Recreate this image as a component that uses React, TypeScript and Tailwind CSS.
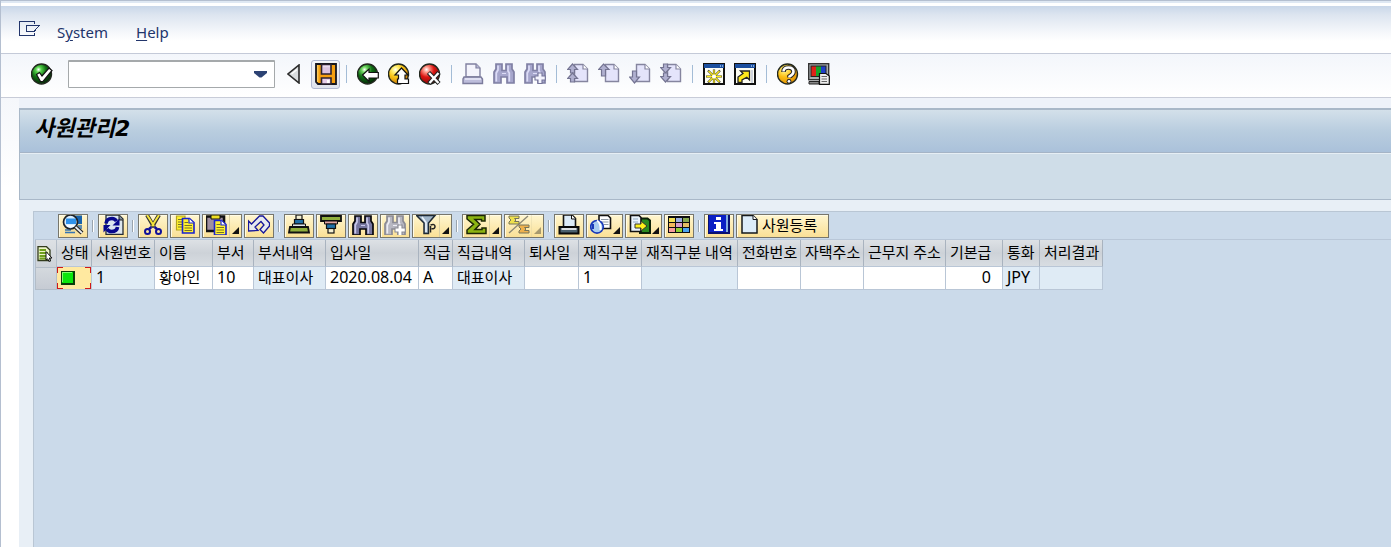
import React from 'react';

type IconProps = { children: React.ReactNode; w?: number; h?: number; crisp?: boolean };

function Glyph({ children, w = 22, h = 22, crisp = false }: IconProps) {
  return (
    <svg
      width={w}
      height={h}
      viewBox={`0 0 ${w} ${h}`}
      fill="none"
      aria-hidden="true"
      className="block shrink-0"
      shapeRendering={crisp ? 'crispEdges' : undefined}
    >
      {children}
    </svg>
  );
}

/* ---------- standard toolbar icons ---------- */

function Ball({ id, light, mid, dark, children }: { id: string; light: string; mid: string; dark: string; children: React.ReactNode }) {
  return (
    <Glyph>
      <defs>
        <radialGradient id={id} cx="0.35" cy="0.28" r="0.75">
          <stop offset="0" stopColor="#ffffff" />
          <stop offset="0.18" stopColor={light} />
          <stop offset="0.5" stopColor={mid} />
          <stop offset="1" stopColor={dark} />
        </radialGradient>
      </defs>
      <circle cx="10.5" cy="11" r="10" fill={`url(#${id})`} stroke="#22281f" strokeWidth="1.4" />
      {children}
    </Glyph>
  );
}

const CheckIcon = () => (
  <Ball id="ball-check" light="#58d44c" mid="#0f6e12" dark="#042606">
    <path d="M5.5 11.5 L8.5 9.5 L11 13 L18 5 L21 7.5 L12 18.5 L9.5 18.5 Z" fill="#fff" stroke="#111" strokeWidth="1.2" />
  </Ball>
);
const BackIcon = () => (
  <Ball id="ball-back" light="#70d860" mid="#0f6e14" dark="#042606">
    <path d="M5.5 12 L12 6 V9.5 H21.3 V15 H12 V18.5 Z" fill="#fff" stroke="#111" strokeWidth="1.2" />
  </Ball>
);
const UpIcon = () => (
  <Ball id="ball-up" light="#fff27a" mid="#f8c414" dark="#c8780c">
    <path d="M13.5 5 L20 12 H17 V16 H20.5 V20.5 H9.5 V16 H10.5 V12 H7 Z" fill="#fff" stroke="#111" strokeWidth="1.2" />
  </Ball>
);
const CancelIcon = () => (
  <Ball id="ball-cancel" light="#ff9a8c" mid="#dc1512" dark="#800808">
    <path d="M9.5 9.5 L20 20.5 M20 9.5 L10 20.5" stroke="#222" strokeWidth="4.4" />
    <path d="M10 10 L19.5 20 M19.5 10 L10.5 20" stroke="#fff" strokeWidth="2.4" />
  </Ball>
);

const TriangleIcon = () => (
  <svg width="13" height="20" viewBox="0 0 13 20" aria-hidden="true" className="block">
    <path d="M12 1 V19 L1 10 Z" fill="#d9dcde" stroke="#2a2a2a" strokeWidth="1.6" />
    <path d="M10 5.5 L4.5 10" stroke="#fff" strokeWidth="1.4" />
  </svg>
);

const SaveIcon = () => (
  <Glyph>
    <path d="M1 1 H21 V21 H3 L1 19 Z" fill="#f59f10" stroke="#16161e" strokeWidth="1.8" />
    <path d="M2.8 2 V19" stroke="#ffd978" />
    <path d="M6.5 1.5 V11 H16 V1.5 Z" fill="#dcc3e0" stroke="#2b2230" strokeWidth="1.6" />
    <path d="M8 3.5 H15" stroke="#ebdcee" strokeWidth="1.5" />
    <path d="M6.5 21 V15 H16 V21 Z" fill="#e6cdea" stroke="#2b2230" strokeWidth="1.6" />
    <rect x="12" y="17" width="2.5" height="3" fill="#fff" />
  </Glyph>
);

const PrintGray = () => (
  <Glyph>
    <path d="M4 1 H14 L18 5 V14 H4 Z" fill="#f4f4fc" stroke="#8080a0" strokeWidth="1.4" />
    <path d="M14 1 V5 H18" fill="#b9b9d5" stroke="#8080a0" strokeWidth="1.2" />
    <path d="M2 14 H19 L20.5 16 V20.5 H1 V16 Z" fill="#bdbddb" stroke="#7c7c9c" strokeWidth="1.4" />
    <path d="M3 16 H19" stroke="#f2f2ff" strokeWidth="1.3" />
  </Glyph>
);

function Binocular({ fill, stroke, light }: { fill: string; stroke: string; light: string }) {
  return (
    <>
      <path d="M3 1 H9 V7.5 H13 V1 H19 V6 L21 9 V20 H14 V14 H8 V20 H1 V9 L3 6 Z" fill={fill} stroke={stroke} strokeWidth="1.7" />
      <path d="M5 2.5 V7 L3.3 10 V18.5 M15 2.5 V8 L16.3 10 V18.5" stroke={light} strokeWidth="1.7" />
      <path d="M9 10.5 H13" stroke={light} />
    </>
  );
}
const Plus = ({ fill, stroke }: { fill: string; stroke: string }) => (
  <path d="M14 10 H18 V13 H21.3 V17 H18 V20.5 H14 V17 H11 V13 H14 Z" fill={fill} stroke={stroke} strokeWidth="1.1" />
);
const FindGray = () => (
  <Glyph>
    <Binocular fill="#a6a6cc" stroke="#8080a4" light="#dcdcf6" />
  </Glyph>
);
const FindNextGray = () => (
  <Glyph>
    <Binocular fill="#a6a6cc" stroke="#8080a4" light="#dcdcf6" />
    <Plus fill="#f3f3fd" stroke="#75759a" />
  </Glyph>
);

function Page() {
  return (
    <g transform="translate(7 1)">
      <path d="M0.5 0.5 H9 L13.5 5 V17.5 H0.5 Z" fill="#e4e4fb" stroke="#85859f" strokeWidth="1.4" />
      <path d="M9 0.5 V5 H13.5" fill="#fff" stroke="#85859f" strokeWidth="1.2" />
    </g>
  );
}
const arrowUp = 'M5.5 0 L10.5 5.5 H7.5 V9 H3.5 V5.5 H0.5 Z';
const arrowDown = 'M3.5 0 H7.5 V3.5 H10.5 L5.5 9 L0.5 3.5 H3.5 Z';
const arrowStyle = { fill: '#b0b0d0', stroke: '#747492', strokeWidth: 1.2 };
const FirstPage = () => (
  <Glyph>
    <Page />
    <path d={arrowUp} transform="translate(0 1)" {...arrowStyle} />
    <path d={arrowUp} transform="translate(0 10)" {...arrowStyle} />
  </Glyph>
);
const PrevPage = () => (
  <Glyph>
    <Page />
    <path d="M5.5 1 L11 6.5 H7.5 V13 H3.5 V6.5 H0.5 Z" {...arrowStyle} />
  </Glyph>
);
const NextPage = () => (
  <Glyph>
    <Page />
    <path d="M3.5 8 H7.5 V14 H10.5 L5.5 20 L0.5 14 H3.5 Z" {...arrowStyle} />
  </Glyph>
);
const LastPage = () => (
  <Glyph>
    <Page />
    <path d={arrowDown} transform="translate(0 1)" {...arrowStyle} />
    <path d={arrowDown} transform="translate(0 10)" {...arrowStyle} />
  </Glyph>
);

const WindowFrame = () => (
  <>
    <rect x="1" y="1" width="20" height="20" fill="#fdfdf4" stroke="#111" strokeWidth="2" />
    <rect x="1" y="1" width="20" height="4" fill="#1c4f9f" />
    <path d="M17 3 H18 M19 3 H20" stroke="#9fc2f0" strokeWidth="1.5" />
  </>
);
const NewSession = () => (
  <Glyph>
    <WindowFrame />
    <path d="M11 6.5 V20 M3 13.5 H19 M5 7.5 L17 19.5 M17 7.5 L5 19.5" stroke="#333" strokeWidth="2.2" />
    <path d="M11 7 V20 M3.5 13.5 H18.5 M5.5 8 L16.5 19 M16.5 8 L5.5 19" stroke="#ffee19" strokeWidth="1.3" />
    <circle cx="11" cy="13.5" r="2" fill="#fff" />
  </Glyph>
);
const Shortcut = () => (
  <Glyph>
    <WindowFrame />
    <path d="M4 19.5 V14 L9 10.5 L6.5 8 H15.5 V17 L12.8 14.3 L8 17 V19.5 Z" fill="#ffe71b" stroke="#222" strokeWidth="1.3" />
    <path d="M18 7 V20" stroke="#cfd3dc" strokeWidth="2" />
  </Glyph>
);
const HelpIcon = () => (
  <Ball id="ball-help" light="#ffe96a" mid="#fbbf14" dark="#e09005">
    <path d="M6.5 9 Q6.5 4.5 11.5 4.5 Q16.5 4.5 16.5 8.7 Q16.5 11 12.5 13.5 V14.5" stroke="#222" strokeWidth="4.6" />
    <circle cx="12" cy="18.3" r="2.4" fill="#222" />
    <path d="M6.5 8.5 Q6.5 4.5 11.5 4.5 Q16.5 4.5 16.5 8.7 Q16.5 11 12.5 13.5 V14.5" stroke="#fff" strokeWidth="2.6" />
    <circle cx="12" cy="18.3" r="1.4" fill="#fff" />
  </Ball>
);
const LayoutIcon = () => (
  <Glyph>
    <rect x="0.7" y="0.7" width="20" height="16" fill="#a9aeb0" stroke="#333" strokeWidth="1.4" />
    <rect x="3" y="3" width="5" height="10.5" fill="#e02118" />
    <rect x="8" y="3" width="5" height="10.5" fill="#16a52a" />
    <rect x="13" y="3" width="5" height="10.5" fill="#1c3fc8" />
    <rect x="3" y="3" width="15" height="10.5" stroke="#222" />
    <path d="M1 18.5 H11 V21 H1 Z" fill="#888" stroke="#222" />
    <path d="M11.5 10.5 H18 L21.3 13 V21.3 H11.5 Z" fill="#eee" stroke="#111" strokeWidth="1.2" />
    <path d="M13.5 13.5 H19 M13.5 16 H19 M13.5 18.5 H19" stroke="#666" />
  </Glyph>
);

/* ---------- grid toolbar icons (22 x 20) ---------- */

const Alv = ({ children, crisp = false }: { children: React.ReactNode; crisp?: boolean }) => (
  <Glyph w={22} h={20} crisp={crisp}>
    {children}
  </Glyph>
);

const DetailIcon = () => (
  <Alv>
    <path d="M3 0 H20 V18.5 H3 Z" fill="#f0dfa0" />
    <path d="M8 0.5 H20 V9 H13 Z" fill="#1763ad" />
    <path d="M16 11 H20 M17 13 H20 M3 15 H9 M3 17.5 H13" stroke="#3576b4" strokeWidth="1.6" />
    <circle cx="8.5" cy="7" r="7" fill="#d8eeff" stroke="#1d2127" strokeWidth="1.7" />
    <path d="M4 3.5 H14 V9 H4 Z" fill="#2f92ea" />
    <path d="M5 11 H12" stroke="#fff" strokeWidth="1.5" />
    <path d="M13.5 12 L20 18" stroke="#222" strokeWidth="4.2" />
    <path d="M13.5 12 L20 18" stroke="#e8ecef" strokeWidth="1.8" />
  </Alv>
);
const RefreshIcon = () => (
  <Alv>
    <path d="M4 0 H17 L21 4 V19.5 H4 Z" fill="#dce6ee" stroke="#222b35" strokeWidth="1.3" />
    <path d="M17 0 V5 H21" fill="#7e8b96" stroke="#222" />
    <path d="M4 8.5 Q4.5 3.5 10 3.5 Q13 3.5 14.5 6.2" stroke="#08088c" strokeWidth="3.6" />
    <path d="M17.5 3.5 V10.5 H10.5 Z" fill="#08088c" />
    <path d="M15.5 12 Q15 16.5 9.5 16.5 Q6.5 16.5 5 14" stroke="#08088c" strokeWidth="3.6" />
    <path d="M1.5 17.5 V10 H8.5 Z" fill="#08088c" />
  </Alv>
);
const CutIcon = () => (
  <Alv>
    <path d="M5 0 L12 12 M17 0 L10 12" stroke="#333" strokeWidth="4" />
    <path d="M5 0 L12 11 M17 0 L10 11" stroke="#f5e63b" strokeWidth="2" />
    <path d="M9.5 12 L7 14 M12.5 12 L15 14" stroke="#10109a" strokeWidth="2.4" />
    <circle cx="5.5" cy="16.5" r="2.5" stroke="#10109a" strokeWidth="2" />
    <circle cx="16.5" cy="16.5" r="2.5" stroke="#10109a" strokeWidth="2" />
  </Alv>
);
const Lines = () => (
  <>
    <path d="M8.5 3.5 H15.5 L20 7.5 V18 H8.5 Z" fill="#fff12c" stroke="#1a22d0" strokeWidth="1.6" />
    <path d="M15 3.5 V8 H19.5" fill="#fff" stroke="#1a22d0" strokeWidth="1.2" />
    <path d="M10.5 7.5 H14 M10.5 10.5 H18 M10.5 13 H18 M10.5 15.5 H18" stroke="#777328" />
  </>
);
const CopyIcon = () => (
  <Alv>
    <path d="M2.5 1 H11 V15 H2.5 Z" fill="#fff12c" stroke="#b5a51e" strokeWidth="1.2" />
    <path d="M4 4.5 H8 M4 7 H8 M4 9.5 H8 M4 12 H8" stroke="#777328" />
    <Lines />
  </Alv>
);
const PasteIcon = () => (
  <Alv>
    <path d="M0 1.5 H18 V16 H0 Z" fill="#a08fa0" stroke="#111" strokeWidth="2.6" />
    <path d="M5 0 H14 V4 H5 Z" fill="#efe022" stroke="#111" />
    <g transform="translate(0 2)">
      <Lines />
    </g>
  </Alv>
);
const UndoIcon = () => (
  <Alv>
    <path d="M0.5 16 V6 L3.5 9 L11.5 1 H15 L21.5 8 V11 L15.5 18 L12 14.5 L16 10 L13 6.5 L7 12 L10 15.5 Z" fill="#e6e9ee" stroke="#16169a" strokeWidth="1.3" />
  </Alv>
);
const SortAsc = () => (
  <Alv>
    <rect x="8" y="0" width="6" height="4.5" fill="#f3efd2" stroke="#111" strokeWidth="1.2" />
    <path d="M6.5 4.5 H15.5 V9 H6.5 Z" fill="#2070a8" stroke="#111" strokeWidth="1.2" />
    <path d="M4.5 9 H17.5 V12 H4.5 Z" fill="#dfe6ee" stroke="#111" />
    <path d="M2 12 H20 L21 17.5 H1 Z" fill="#8fae3c" stroke="#111" strokeWidth="1.8" />
  </Alv>
);
const SortDesc = () => (
  <Alv>
    <path d="M1 1 H21 V6 H1 Z" fill="#8fae3c" stroke="#111" strokeWidth="1.8" />
    <path d="M4.5 6 H17.5 V9 H4.5 Z" fill="#e4a4a4" stroke="#111" />
    <path d="M6.5 9 H15.5 V13.5 H6.5 Z" fill="#2070a8" stroke="#111" strokeWidth="1.2" />
    <rect x="8" y="13.5" width="6" height="4.5" fill="#f3efd2" stroke="#111" strokeWidth="1.2" />
  </Alv>
);
const FindIcon = () => (
  <Alv>
    <Binocular fill="#76769f" stroke="#08080c" light="#c8c8ea" />
  </Alv>
);
const FindNextIcon = () => (
  <Alv>
    <Binocular fill="#b7b7c1" stroke="#8b8b94" light="#ededf5" />
    <Plus fill="#fff" stroke="#8b8b94" />
  </Alv>
);
const FilterIcon = () => (
  <Alv>
    <path d="M0.5 0.5 H19 L12.5 8 V18.5 H8 V8 Z" fill="#9fb4c8" stroke="#1e2934" strokeWidth="1.5" />
    <path d="M6 2 L10 7.5 V17" stroke="#edf4fa" strokeWidth="1.6" />
    <path d="M14.5 17.5 V11 M14.5 10 Q19 8.5 19 11.5 Q19 14 15.5 13.7" stroke="#222" strokeWidth="1.5" />
  </Alv>
);
const SumIcon = () => (
  <Alv>
    <path d="M1 0.5 H19 V6 H15.5 V4.5 H9 L14 9.3 L9 14.5 H16 V13 H20 V18.5 H1 V15 L7.5 9.3 L1 4 Z" fill="#8cb412" stroke="#1c2605" strokeWidth="1.5" />
  </Alv>
);
const SubtotalIcon = () => (
  <Alv>
    <path d="M1 18 L20 1" stroke="#8b8775" strokeWidth="1.3" />
    <path d="M1 1 H11 V3.5 H6.5 L8 5 L6.5 6.5 H11 V9 H1 V7 L3 5 L1 3 Z" fill="#efe14d" stroke="#77745a" />
    <path d="M11 10 H21 V12.5 H16.5 L18 14 L16.5 15.5 H21 V18 H11 V16 L13 14 L11 12 Z" fill="#efb14d" stroke="#77745a" />
  </Alv>
);
const PrintIcon = () => (
  <Alv>
    <path d="M5.5 0 H14 L17.5 3.5 V12 H5.5 Z" fill="#dcebf8" stroke="#111" strokeWidth="1.6" />
    <path d="M13.5 0 V4 H17.5" fill="#fff" stroke="#111" />
    <path d="M1.5 12 H20.5 V18.5 H1.5 Z" fill="#4a606e" stroke="#080808" strokeWidth="2" />
    <path d="M3.5 14 H18.5" stroke="#fff" strokeWidth="1.6" />
  </Alv>
);
const ViewIcon = () => (
  <Alv>
    <path d="M9 0.5 H18 L20.5 3 V13.5 H9 Z" fill="#fff" stroke="#111" strokeWidth="1.6" />
    <path d="M11 4.5 H18.5 M11 7 H18.5 M14 9.5 H18.5" stroke="#8d99a5" />
    <circle cx="7" cy="11.8" r="6.3" fill="#a9cdf0" stroke="#1838b8" strokeWidth="1.7" />
    <path d="M7 5.5 Q11 8 10.5 15" stroke="#fff" strokeWidth="2" />
    <path d="M3 9 V14" stroke="#1838b8" strokeWidth="2" />
  </Alv>
);
const ExportIcon = () => (
  <Alv>
    <path d="M11 3.5 H18.5 L21 5.5 V18 H11 Z" fill="#2b8a20" stroke="#0c2108" strokeWidth="2" />
    <path d="M1.5 0.5 H10 L12 2.5 V16.5 H1.5 Z" fill="#eaf3fb" stroke="#111" strokeWidth="1.6" />
    <path d="M4 4 H9 M4 7 H9" stroke="#8fa8bf" />
    <path d="M6 9 H12 V6 L18 11 L12 16 V13 H6 Z" fill="#fff219" stroke="#333" />
  </Alv>
);
const GridIcon = () => (
  <Alv crisp>
    <rect x="0" y="1" width="22" height="17" fill="#0c0c10" />
    <rect x="1" y="3" width="6" height="4" fill="#f2e055" />
    <rect x="8" y="3" width="6" height="4" fill="#9aaee0" />
    <rect x="15" y="3" width="6" height="4" fill="#86a850" />
    <rect x="1" y="8" width="6" height="4" fill="#f3b95c" />
    <rect x="8" y="8" width="6" height="4" fill="#d79bcb" />
    <rect x="15" y="8" width="6" height="4" fill="#e2bd65" />
    <rect x="1" y="13" width="6" height="4" fill="#f79c9c" />
    <rect x="8" y="13" width="6" height="4" fill="#8ecf35" />
    <rect x="15" y="13" width="6" height="4" fill="#4aa4f2" />
  </Alv>
);
const InfoIcon = () => (
  <Alv crisp>
    <rect x="0" y="0" width="22" height="19" fill="#081070" />
    <rect x="1" y="0" width="17" height="17" fill="#0a1fc4" />
    <rect x="18" y="0" width="2" height="17" fill="#83aede" />
    <rect x="8" y="2" width="5" height="3" fill="#fff" />
    <path d="M6 7 H13 V14 H15 V16 H6 V14 H8 V9 H6 Z" fill="#fff" />
  </Alv>
);
const NewDocIcon = () => (
  <svg width="17" height="19" viewBox="0 0 17 19" aria-hidden="true" className="block shrink-0">
    <path d="M1 0.5 H12 L16 4.5 V18 H1 Z" fill="#dcecf9" stroke="#15191d" strokeWidth="1.5" />
    <path d="M12 0.5 V4.5 H16" fill="#fff" stroke="#15191d" />
  </svg>
);
const SelectAllIcon = () => (
  <svg width="16" height="16" viewBox="0 0 16 16" aria-hidden="true" className="block">
    <path d="M1 0.7 H9.5 L13 4 V14.5 H1 Z" fill="#eef5c8" stroke="#333c1c" strokeWidth="1.3" />
    <path d="M2.5 4 H9 M2.5 7 H11 M2.5 10 H11 M2.5 12.5 H9" stroke="#6fa01c" strokeWidth="1.8" />
    <path d="M9 5.5 L15 12 L12.3 12 L13.5 15 L11.8 15.3 L10.8 12.8 L9 14 Z" fill="#fff" stroke="#111" />
  </svg>
);

/* ---------- building blocks ---------- */

const Sep = () => (
  <span className="flex w-[3px] shrink-0 justify-center">
    <span className="h-[18px] w-px bg-[#a3bcd6]" />
  </span>
);

function ToolButton({ label, children }: { label: string; children: React.ReactNode }) {
  return (
    <button type="button" aria-label={label} className="shrink-0">
      {children}
    </button>
  );
}

const AlvSep = () => (
  <span className="flex h-3 w-[6px] shrink-0 justify-center">
    <span className="w-px bg-[#9aa4ad]" />
    <span className="w-px bg-white" />
  </span>
);

const alvBox = 'flex h-6 shrink-0 border border-[#77766c] bg-linear-to-b from-[#fff6cf] to-[#fae096] shadow-[inset_1px_1px_0_#fffbe6]';

const alvWidths = { single: 'w-[30px]', split: 'w-10', compact: 'w-[37px]' };

function AlvButton({
  label,
  kind = 'single',
  disabled = false,
  children,
}: {
  label: string;
  kind?: keyof typeof alvWidths;
  disabled?: boolean;
  children: React.ReactNode;
}) {
  return (
    <button type="button" aria-label={label} disabled={disabled} className={`${alvBox} ${alvWidths[kind]} pl-[3px]`}>
      {children}
      {kind !== 'single' && (
        <span
          className={`ml-auto flex h-full items-end justify-end pr-[2px] pb-[3px] ${kind === 'split' ? 'w-3 border-l border-[#d9cfa3]' : 'w-[9px]'} ${
            disabled ? 'opacity-35' : ''
          }`}
        >
          <svg width="7" height="7" viewBox="0 0 7 7" aria-hidden="true">
            <path d="M7 0 V7 H0 Z" fill="#111" />
          </svg>
        </span>
      )}
    </button>
  );
}

type Column = { title: string; width: string; value: string; editable?: boolean; latin?: boolean; right?: boolean };

const columns: Column[] = [
  { title: '사원번호', width: 'w-[63px]', value: '1', latin: true },
  { title: '이름', width: 'w-[58px]', value: '황아인', editable: true },
  { title: '부서', width: 'w-[41px]', value: '10', editable: true, latin: true },
  { title: '부서내역', width: 'w-[72px]', value: '대표이사' },
  { title: '입사일', width: 'w-[93px]', value: '2020.08.04', editable: true, latin: true },
  { title: '직급', width: 'w-[34px]', value: 'A', editable: true, latin: true },
  { title: '직급내역', width: 'w-[72px]', value: '대표이사' },
  { title: '퇴사일', width: 'w-[54px]', value: '', editable: true },
  { title: '재직구분', width: 'w-[63px]', value: '1', editable: true, latin: true },
  { title: '재직구분 내역', width: 'w-[96px]', value: '' },
  { title: '전화번호', width: 'w-[63px]', value: '', editable: true },
  { title: '자택주소', width: 'w-[63px]', value: '', editable: true },
  { title: '근무지 주소', width: 'w-[82px]', value: '', editable: true },
  { title: '기본급', width: 'w-[57px]', value: '0', editable: true, latin: true, right: true },
  { title: '통화', width: 'w-[37px]', value: 'JPY', latin: true },
  { title: '처리결과', width: 'w-[63px]', value: '' },
];

const th =
  'border-r border-b border-r-[#a9b3bf] border-b-[#b9c6d6] bg-linear-to-b from-[#dde1e5] via-[#cdd2d8] to-[#d8dde2] p-0 pb-[2px] pl-1 text-left font-normal whitespace-nowrap';

function EmployeeGrid() {
  return (
    <table className="w-[1068px] table-fixed border-separate border-spacing-0 text-[15px] leading-5 text-black">
      <thead>
        <tr className="h-[27px]">
          <th className="w-[22px] border-r border-l border-[#b3bdc8] bg-linear-to-b from-[#dde1e5] to-[#cdd2d8] p-0 pl-px">
            <button type="button" aria-label="전체 선택" className="block">
              <SelectAllIcon />
            </button>
          </th>
          <th className={`${th} w-[35px]`}>상태</th>
          {columns.map((c) => (
            <th key={c.title} className={`${th} ${c.width}`}>
              {c.title}
            </th>
          ))}
        </tr>
      </thead>
      <tbody>
        <tr className="h-[23px]">
          <td className="border border-t-[#b3bdc8] border-[#b3bdc8] bg-linear-to-b from-[#d4d9de] to-[#c6cbd3] p-0" />
          <td className="border-r border-b border-[#b9c6d6] bg-[#ffe9a0] p-0">
            <svg width="34" height="22" viewBox="0 0 34 22" aria-label="정상" role="img" className="block" shapeRendering="crispEdges">
              <path d="M0.5 6 V0.5 H6 M28 0.5 H33.5 V6 M0.5 16 V21.5 H6 M28 21.5 H33.5 V16" stroke="#d01818" fill="none" />
              <rect x="4" y="4" width="14" height="14" fill="#0b3d08" />
              <rect x="5" y="5" width="11" height="11" fill="#0ce60c" />
              <path d="M5 5.5 H15 M5.5 5 V15" stroke="#7dff70" />
            </svg>
          </td>
          {columns.map((c) => (
            <td
              key={c.title}
              className={`border-r border-b border-[#b9c6d6] p-0 pb-[2px] pl-1 whitespace-nowrap ${c.editable ? 'bg-white' : 'bg-[#dfebf5]'} ${
                c.latin ? 'text-base leading-5' : ''
              } ${c.right ? 'pr-[11px] text-right' : ''}`}
            >
              {c.value}
            </td>
          ))}
        </tr>
      </tbody>
    </table>
  );
}

export default function App() {
  return (
    <div className="flex min-h-screen flex-col overflow-hidden border-t border-l border-[#b4bfd0] bg-white font-['Noto_Sans','Noto_Sans_CJK_KR',sans-serif]">
      <nav className="flex h-[53px] items-center border-b border-[#c4cad8] bg-[linear-gradient(to_bottom,#dfe8f3_0,#dfe8f3_2px,#ffffff_2px,#ffffff_5px,#c9d7e9_5px,#dde5f0_14px,#f6f8fb_32px,#ffffff_40px)] pt-[11px] pl-[18px] text-[15px] text-[#22356b]">
        <button type="button" aria-label="Menu" className="mb-2">
          <svg width="22" height="16" viewBox="0 0 22 16" fill="none" stroke="#22356b" aria-hidden="true" shapeRendering="crispEdges">
            <path d="M15.5 3 V0.5 H0.5 V14.5 H15.5 V12" />
            <path d="M20.5 4.5 H7.5 V10.5 H15 M20.5 4.5 L15 10.5" />
          </svg>
        </button>
        <button type="button" className="ml-4">
          S<u className="underline-offset-2">y</u>stem
        </button>
        <button type="button" className="ml-7">
          <u className="underline-offset-2">H</u>elp
        </button>
      </nav>

      <div className="flex h-11 items-center gap-[9px] border-b border-[#c8ccd8] bg-linear-to-b from-[#f3f6fb] to-white pb-[3px] pl-[30px]">
        <ToolButton label="Enter"><CheckIcon /></ToolButton>
        <div className="ml-[6px] flex h-7 w-[207px] shrink-0 items-center rounded-[1px] border border-t-2 border-[#a5a9ab] bg-white">
          <input aria-label="Command" className="h-full min-w-0 flex-1 px-1 text-sm outline-none" />
          <button type="button" aria-label="Command history" className="flex h-full w-7 items-center justify-center">
            <svg width="13" height="7" viewBox="0 0 13 7" aria-hidden="true">
              <path d="M0 0 H13 V2 L7.5 6.5 H5.5 L0 2 Z" fill="#2c4273" />
            </svg>
          </button>
        </div>
        <div className="ml-[3px] flex shrink-0 items-center gap-[11px]">
          <ToolButton label="Collapse"><TriangleIcon /></ToolButton>
          <button type="button" aria-label="Save" className="flex size-[29px] items-center justify-center rounded-[3px] border border-[#b0b7d0] bg-linear-to-b from-[#f5f6fa] to-[#dfe3ee]">
            <SaveIcon />
          </button>
        </div>
        <span className="-ml-1 flex"><Sep /></span>
        <ToolButton label="Back"><BackIcon /></ToolButton>
        <ToolButton label="Exit"><UpIcon /></ToolButton>
        <ToolButton label="Cancel"><CancelIcon /></ToolButton>
        <Sep />
        <ToolButton label="Print"><PrintGray /></ToolButton>
        <ToolButton label="Find"><FindGray /></ToolButton>
        <ToolButton label="Find next"><FindNextGray /></ToolButton>
        <Sep />
        <ToolButton label="First page"><FirstPage /></ToolButton>
        <ToolButton label="Previous page"><PrevPage /></ToolButton>
        <ToolButton label="Next page"><NextPage /></ToolButton>
        <ToolButton label="Last page"><LastPage /></ToolButton>
        <Sep />
        <ToolButton label="New session"><NewSession /></ToolButton>
        <ToolButton label="Create shortcut"><Shortcut /></ToolButton>
        <Sep />
        <ToolButton label="Help"><HelpIcon /></ToolButton>
        <ToolButton label="Customize layout"><LayoutIcon /></ToolButton>
      </div>

      <div className="flex grow flex-col bg-linear-to-b from-[#f5f7fb] to-white to-20% pl-[18px]">
        <div className="h-[10px] bg-[#eef2f9]" />
        <header className="border border-r-0 border-t-2 border-[#a9b8c8]">
          <div className="flex h-[43px] items-center border-b border-[#a5b4c6] bg-linear-to-b from-[#d3e0ea] via-[#b9cddf] to-[#aac1da] pb-1 pl-[14px]">
            <h1 className="font-['DejaVu_Sans','Noto_Sans_CJK_KR',sans-serif] text-[22px] leading-6 font-bold text-black italic">사원관리2</h1>
          </div>
          <div className="h-[46px] border-t border-[#e6eef4] bg-[#cfdde8]" />
        </header>
        <main className="flex grow flex-col bg-[#e8eff6] pt-[11px] pl-[14px]">
          <section className="grow border-t border-l border-[#b9c6d4] bg-[#cbdaea] pl-px">
            <div className="flex h-7 items-center gap-[2px] border-b border-[#b9c7d8] pl-[23px]">
              <AlvButton label="상세"><DetailIcon /></AlvButton>
              <AlvSep />
              <AlvButton label="새로고침"><RefreshIcon /></AlvButton>
              <AlvSep />
              <AlvButton label="잘라내기"><CutIcon /></AlvButton>
              <AlvButton label="복사"><CopyIcon /></AlvButton>
              <AlvButton label="붙여넣기" kind="split"><PasteIcon /></AlvButton>
              <AlvButton label="실행 취소"><UndoIcon /></AlvButton>
              <AlvSep />
              <AlvButton label="오름차순 정렬"><SortAsc /></AlvButton>
              <AlvButton label="내림차순 정렬"><SortDesc /></AlvButton>
              <AlvButton label="찾기"><FindIcon /></AlvButton>
              <AlvButton label="다음 찾기" disabled><FindNextIcon /></AlvButton>
              <AlvButton label="필터" kind="split"><FilterIcon /></AlvButton>
              <AlvSep />
              <AlvButton label="합계" kind="split"><SumIcon /></AlvButton>
              <AlvButton label="소계" kind="split" disabled><SubtotalIcon /></AlvButton>
              <AlvSep />
              <AlvButton label="인쇄"><PrintIcon /></AlvButton>
              <AlvButton label="보기" kind="compact"><ViewIcon /></AlvButton>
              <AlvButton label="내보내기" kind="compact"><ExportIcon /></AlvButton>
              <AlvButton label="레이아웃"><GridIcon /></AlvButton>
              <AlvSep />
              <AlvButton label="정보"><InfoIcon /></AlvButton>
              <button type="button" className={`${alvBox} w-[93px] gap-1 pl-1 text-[15px] leading-5 text-black`}>
                <NewDocIcon />
                사원등록
              </button>
            </div>
            <EmployeeGrid />
          </section>
        </main>
      </div>
    </div>
  );
}
